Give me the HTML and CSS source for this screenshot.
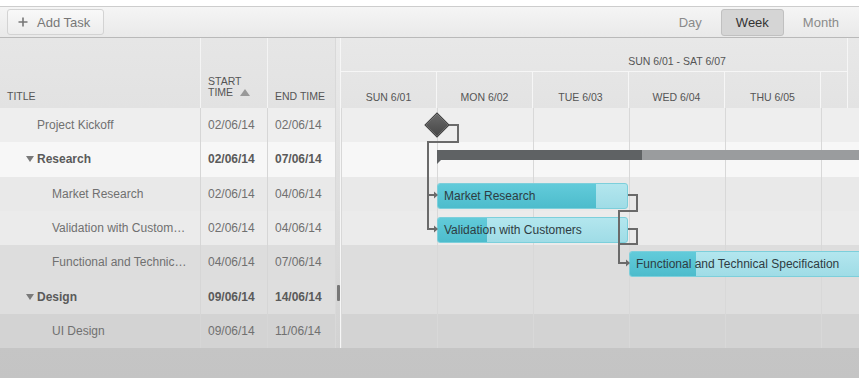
FILE: index.html
```html
<!DOCTYPE html>
<html lang="en">
<head>
<meta charset="UTF-8">
<meta name="viewport" content="width=device-width, initial-scale=1.0">
<title>Gantt</title>
<link rel="stylesheet" href="styles.css">
</head>
<body>
<div class="topbar"></div>
<div class="toolbar">
  <button class="add-task">
    <svg class="plus" width="10" height="10" viewBox="0 0 10 10"><path d="M5 0.5V9.5M0.5 5H9.5" stroke="#777" stroke-width="1.6"/></svg>
    Add Task
  </button>
  <div class="views">
    <button class="view">Day</button>
    <button class="view active">Week</button>
    <button class="view">Month</button>
  </div>
</div>

<div class="gantt">
  <div class="grid">
    <div class="grid-head">
      <div class="hcol c-title">Title</div>
      <div class="hcol c-start"><span>Start<br>Time <i class="sort"></i></span></div>
      <div class="hcol c-end">End Time</div>
    </div>
    <div class="grid-body">
      <div class="row">
        <div class="cell c-title lvl1">Project Kickoff</div>
        <div class="cell c-start">02/06/14</div>
        <div class="cell c-end">02/06/14</div>
      </div>
      <div class="row summary">
        <div class="cell c-title lvl0"><i class="caret"></i>Research</div>
        <div class="cell c-start">02/06/14</div>
        <div class="cell c-end">07/06/14</div>
      </div>
      <div class="row">
        <div class="cell c-title lvl2">Market Research</div>
        <div class="cell c-start">02/06/14</div>
        <div class="cell c-end">04/06/14</div>
      </div>
      <div class="row">
        <div class="cell c-title lvl2">Validation with Custom…</div>
        <div class="cell c-start">02/06/14</div>
        <div class="cell c-end">04/06/14</div>
      </div>
      <div class="row">
        <div class="cell c-title lvl2">Functional and Technic…</div>
        <div class="cell c-start">04/06/14</div>
        <div class="cell c-end">07/06/14</div>
      </div>
      <div class="row summary">
        <div class="cell c-title lvl0"><i class="caret"></i>Design</div>
        <div class="cell c-start">09/06/14</div>
        <div class="cell c-end">14/06/14</div>
      </div>
      <div class="row">
        <div class="cell c-title lvl2">UI Design</div>
        <div class="cell c-start">09/06/14</div>
        <div class="cell c-end">11/06/14</div>
      </div>
    </div>
  </div>

  <div class="splitter"><span class="handle"></span></div>

  <div class="timeline">
    <div class="tl-headbar">
      <div class="tl-headclip">
        <div class="tl-head">
          <div class="week">SUN 6/01 - SAT 6/07</div>
          <div class="days">
            <div class="day">SUN 6/01</div>
            <div class="day">MON 6/02</div>
            <div class="day">TUE 6/03</div>
            <div class="day">WED 6/04</div>
            <div class="day">THU 6/05</div>
            <div class="day">FRI 6/06</div>
            <div class="day">SAT 6/07</div>
          </div>
        </div>
      </div>
    </div>
    <div class="tl-body">
      <div class="tl-row">
        <div class="milestone" style="left: 87px;"></div>
      </div>
      <div class="tl-row">
        <div class="summary-bar" style="left: 96px; width: 576px;">
          <div class="summary-done" style="width: 205px;"></div>
        </div>
      </div>
      <div class="tl-row">
        <div class="task" style="left: 96px; width: 191px;">
          <div class="task-done" style="width: 158px;"></div>
          <span class="task-label">Market Research</span>
        </div>
      </div>
      <div class="tl-row">
        <div class="task" style="left: 96px; width: 191px;">
          <div class="task-done" style="width: 49px;"></div>
          <span class="task-label">Validation with Customers</span>
        </div>
      </div>
      <div class="tl-row">
        <div class="task" style="left: 288px; width: 384px;">
          <div class="task-done" style="width: 66px;"></div>
          <span class="task-label">Functional and Technical Specification</span>
        </div>
      </div>
      <div class="tl-row"></div>
      <div class="tl-row"></div>

      <svg class="deps" width="672" height="240" viewBox="0 0 672 240">
        <g fill="none" stroke="#6a6a6a" stroke-width="2">
          <path d="M108 17H117V34H87V87H94"/>
          <path d="M87 87V121H94"/>
          <path d="M287 87H296V103H278V155H286"/>
          <path d="M287 121H296V136H278"/>
        </g>
        <g fill="#6a6a6a">
          <polygon points="93,83.5 97,87 93,90.5"/>
          <polygon points="93,117.5 97,121 93,124.5"/>
          <polygon points="285,151.5 289,155 285,158.5"/>
        </g>
      </svg>
    </div>
  </div>
</div>
</body>
</html>
```

FILE: styles.css
```css
body {
  margin: 0;
  font-family: "Liberation Sans", Arial, sans-serif;
  background: linear-gradient(#d0d0d0, #c4c4c4);
  height: 378px;
  overflow: hidden;
}

.topbar {
  height: 6px;
  background: #fff;
  border-bottom: 1px solid #cdcdcd;
}

.toolbar {
  height: 30px;
  display: flex;
  align-items: center;
  justify-content: space-between;
  padding: 0 5px 0 7px;
  background: linear-gradient(#f5f5f5, #e9e9e9);
  border-bottom: 1px solid #b9b9b9;
}

.add-task {
  display: flex;
  align-items: center;
  gap: 9px;
  height: 26px;
  width: 97px;
  padding: 0 0 0 10px;
  border: 1px solid #d3d3d3;
  border-radius: 3px;
  background: linear-gradient(#f9f9f9, #ededed);
  font-family: inherit;
  font-size: 13px;
  color: #777;
}

.views {
  display: flex;
  gap: 4px;
}

.view {
  height: 27px;
  padding: 0 14px;
  border: 1px solid transparent;
  border-radius: 3px;
  background: none;
  font-family: inherit;
  font-size: 13px;
  color: #8a8a8a;
}

.view.active {
  background: #d5d5d5;
  border-color: #c0c0c0;
  color: #333;
}

.gantt {
  display: flex;
  height: 310px;
}

.grid {
  width: 335px;
  flex: none;
}

.grid-head {
  display: flex;
  height: 70px;
  background: linear-gradient(#e6e6e6, #e2e2e2);
}

.hcol {
  display: flex;
  align-items: flex-end;
  padding: 0 0 6px 7px;
  box-sizing: border-box;
  font-size: 10.5px;
  text-transform: uppercase;
  color: #555;
  border-right: 1px solid #f4f4f4;
}

.hcol.c-start {
  padding-bottom: 10px;
  line-height: 11px;
}

.hcol.c-end {
  border-right: none;
}

.sort {
  display: inline-block;
  margin-left: 4px;
  border-left: 5px solid transparent;
  border-right: 5px solid transparent;
  border-bottom: 7px solid #999;
}

.c-title {
  width: 201px;
}

.c-start,
.c-end {
  width: 67px;
}

.row,
.tl-row {
  height: 34.33px;
}

.row {
  display: flex;
}

.gantt .row:nth-child(1), .tl-row:nth-child(1) { background-color: #eeeeee; }
.gantt .row:nth-child(2), .tl-row:nth-child(2) { background-color: #f7f7f7; }
.gantt .row:nth-child(3), .tl-row:nth-child(3) { background-color: #e9e9e9; }
.gantt .row:nth-child(4), .tl-row:nth-child(4) { background-color: #ebebeb; }
.gantt .row:nth-child(5), .tl-row:nth-child(5) { background-color: #dddddd; }
.gantt .row:nth-child(6), .tl-row:nth-child(6) { background-color: #dedede; }
.gantt .row:nth-child(7), .tl-row:nth-child(7) { background-color: #d3d3d3; }

.cell {
  display: flex;
  align-items: center;
  padding-left: 7px;
  box-sizing: border-box;
  font-size: 12px;
  color: #707070;
  border-right: 1px solid #d6d6d6;
  white-space: nowrap;
  overflow: hidden;
}

.cell.c-end {
  border-right: none;
}

.cell.lvl0 { padding-left: 26px; }
.cell.lvl1 { padding-left: 37px; }
.cell.lvl2 { padding-left: 52px; }

.summary .cell {
  font-weight: bold;
  color: #5a5a5a;
}

.caret {
  display: inline-block;
  margin-right: 3px;
  border-left: 4px solid transparent;
  border-right: 4px solid transparent;
  border-top: 6px solid #7a7a7a;
}

.splitter {
  position: relative;
  width: 6px;
  flex: none;
  box-sizing: border-box;
  background: linear-gradient(#ebebeb, #d2d2d2);
  border-left: 1px solid #d9d9d9;
  border-right: 1px solid #f6f6f6;
}

.handle {
  position: absolute;
  left: 1px;
  top: 247px;
  width: 3px;
  height: 16px;
  background: #777;
  border-radius: 1px;
}

.timeline {
  flex: 1;
  overflow: hidden;
}

.tl-headbar {
  height: 70px;
  background: linear-gradient(#e8e8e8, #e3e3e3);
}

.tl-headclip {
  width: 506px;
  height: 70px;
  overflow: hidden;
  border-right: 1px solid #f6f6f6;
}

.tl-head {
  width: 672px;
  font-size: 10.5px;
  color: #555;
}

.week {
  height: 34px;
  box-sizing: border-box;
  padding-top: 17px;
  text-align: center;
  border-bottom: 1px solid #f6f6f6;
}

.days {
  display: flex;
}

.day {
  width: 96px;
  height: 36px;
  box-sizing: border-box;
  padding-top: 19px;
  text-align: center;
  border-right: 1px solid #f6f6f6;
}

.tl-body {
  position: relative;
  width: 672px;
}

.tl-row {
  position: relative;
  background-image: linear-gradient(to right, transparent 95px, #d8d8d8 95px);
  background-size: 96px 100%;
  background-position: 1px 0;
}

.milestone {
  position: absolute;
  top: 8px;
  width: 16px;
  height: 16px;
  transform: rotate(45deg);
  background: linear-gradient(135deg, #6a6a6a, #464646);
  border: 1px solid #3a3a3a;
}

.summary-bar {
  position: absolute;
  top: 8px;
  height: 10px;
  background: #9a9c9e;
}

.summary-bar::after {
  content: "";
  position: absolute;
  left: 0;
  top: 10px;
  border-top: 4px solid #5f6264;
  border-right: 4px solid transparent;
}

.summary-done {
  height: 100%;
  background: #5f6264;
}

.task {
  position: absolute;
  top: 6px;
  height: 26px;
  box-sizing: border-box;
  border: 1px solid #7ccfdb;
  border-radius: 3px;
  background: linear-gradient(#b3e6ee, #9fdce6);
  overflow: hidden;
}

.task-done {
  height: 100%;
  background: linear-gradient(#62cbda, #4dbccc);
}

.task-label {
  position: absolute;
  left: 6px;
  top: 0;
  line-height: 24px;
  font-size: 12px;
  color: #2e3c42;
  white-space: nowrap;
}

.deps {
  position: absolute;
  left: 0;
  top: 0;
}
```
